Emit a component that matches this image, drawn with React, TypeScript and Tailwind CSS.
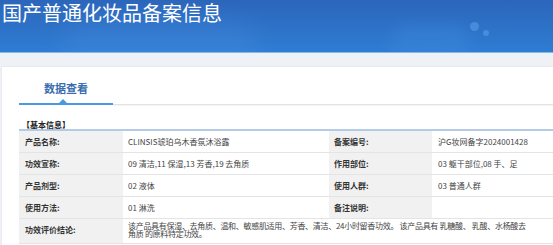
import React from 'react';

type Cell = { label: string; value: string };

const rows: [Cell, Cell][] = [
  [
    { label: '产品名称:', value: 'CLINSIS琥珀乌木香氛沐浴露' },
    { label: '备案编号:', value: '沪G妆网备字2024001428' },
  ],
  [
    { label: '功效宣称:', value: '09 清洁,11 保湿,13 芳香,19 去角质' },
    { label: '作用部位:', value: '03 躯干部位,08 手、足' },
  ],
  [
    { label: '产品剂型:', value: '02 液体' },
    { label: '使用人群:', value: '03 普通人群' },
  ],
  [
    { label: '使用方法:', value: '01 淋洗' },
    { label: '备注说明:', value: '' },
  ],
];

const labelCls =
  'h-[22px] flex items-center bg-[#f1f1f1] border-b border-[#e4e4e4] text-[#333] font-semibold';
const valueCls = 'h-[22px] flex items-center bg-white border-b border-[#e4e4e4] text-[#444]';

export default function App() {
  return (
    <div className="w-[553px] h-[245px] overflow-hidden bg-[#eef2f6] font-['Noto_Sans_CJK_SC','Noto_Sans',sans-serif]">
      {/* header */}
      <div className="relative h-[53px] overflow-hidden bg-gradient-to-b from-[#2c66bb] to-[#2e7dd3] border-b border-[#86b6ea]">
        <div className="absolute left-[60px] top-[22px] w-[200px] h-[60px] rounded-full bg-[#4a8ee0] opacity-30 blur-md" />
        <div className="absolute left-[390px] top-[26px] w-[80px] h-[40px] rounded-full bg-[#3a86da] opacity-50 blur-sm" />
        <div className="absolute left-[470px] top-[22px] w-[9px] h-[9px] rounded-full bg-[#5a9be6] opacity-60" />
        <div className="absolute left-[483px] top-[30px] w-[6px] h-[6px] rounded-full bg-[#5a9be6] opacity-60" />
        <div className="relative pl-[2px] text-[20px] leading-[26px] text-white">
          国产普通化妆品备案信息
        </div>
      </div>

      {/* card */}
      <div className="pt-[14px]">
        <div className="ml-[2px] w-[600px] h-[200px] bg-white shadow-[0_0_2px_rgba(0,0,0,0.08)]">
          <div className="ml-[17px] flex items-end">
            <div className="relative w-[94px] pt-[15px] pb-[8px] text-center text-[11px] leading-[13px] font-bold text-[#3a6cb0] border-b-2 border-[#4a9ae2]">
              数据查看
              <span className="absolute bottom-0 left-[40px] w-0 h-0 border-l-[4px] border-r-[4px] border-b-[4px] border-l-transparent border-r-transparent border-b-[#4a9ae2]" />
            </div>
            <div className="flex-1 border-b border-[#e3e3e3] shadow-[0_1px_1px_rgba(0,0,0,0.05)]" />
          </div>

          <div className="ml-[17px] mr-[20px]">
            <div className="mt-[15px] pl-[3px] text-[8px] leading-[9px] font-bold text-[#222]">
              【基本信息】
            </div>
            <div className="border-t-2 border-[#b4cbe8] grid grid-cols-[104px_206px_103px_1fr] text-[8px] leading-[10px]">
              {rows.map(([a, b]) => (
                <React.Fragment key={a.label}>
                  <div className={`${labelCls} pl-[6px]`}>{a.label}</div>
                  <div className={`${valueCls} pl-[5px]`}>{a.value}</div>
                  <div className={`${labelCls} pl-[5px]`}>{b.label}</div>
                  <div className={`${valueCls} pl-[6px]`}>{b.value}</div>
                </React.Fragment>
              ))}
              <div className="h-[25px] flex items-center bg-[#f1f1f1] border-b border-[#e4e4e4] pl-[6px] pb-[2px] text-[#333] font-semibold">
                功效评价结论:
              </div>
              <div className="col-span-3 h-[25px] flex items-center bg-white border-b border-[#e4e4e4] pl-[5px] pb-[2px] text-[#444] leading-[8px] tracking-[-0.3px]">
                <div>
                  <div className="whitespace-nowrap">
                    该产品具有保湿、去角质、温和、敏感肌适用、芳香、清洁、24小时留香功效。 该产品具有 乳糖酸、 乳酸、水杨酸去
                  </div>
                  <div className="whitespace-nowrap">角质 的原料特定功效。</div>
                </div>
              </div>
            </div>
          </div>
        </div>
      </div>
    </div>
  );
}
